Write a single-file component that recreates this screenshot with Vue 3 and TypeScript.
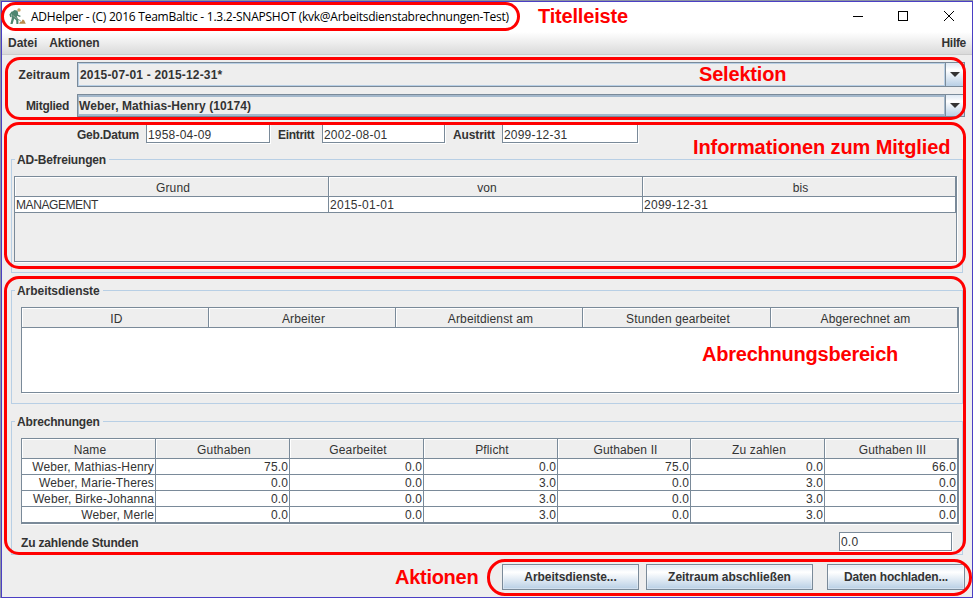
<script setup lang="ts">
interface TableData {
  kind: string
  columns: string[]
  rows: string[][]
}

const exemptions: TableData = {
  kind: 'exemptions',
  columns: ['Grund', 'von', 'bis'],
  rows: [['MANAGEMENT', '2015-01-01', '2099-12-31']],
}

const services: TableData = {
  kind: 'services',
  columns: ['ID', 'Arbeiter', 'Arbeitdienst am', 'Stunden gearbeitet', 'Abgerechnet am'],
  rows: [],
}

const billing: TableData = {
  kind: 'billing',
  columns: ['Name', 'Guthaben', 'Gearbeitet', 'Pflicht', 'Guthaben II', 'Zu zahlen', 'Guthaben III'],
  rows: [
    ['Weber, Mathias-Henry', '75.0', '0.0', '0.0', '75.0', '0.0', '66.0'],
    ['Weber, Marie-Theres', '0.0', '0.0', '3.0', '0.0', '3.0', '0.0'],
    ['Weber, Birke-Johanna', '0.0', '0.0', '3.0', '0.0', '3.0', '0.0'],
    ['Weber, Merle', '0.0', '0.0', '3.0', '0.0', '3.0', '0.0'],
  ],
}

const groups = [
  { title: 'AD-Befreiungen', table: exemptions, footer: false },
  { title: 'Arbeitsdienste', table: services, footer: false },
  { title: 'Abrechnungen', table: billing, footer: true },
]

const selectors = [
  { label: 'Zeitraum', value: '2015-07-01 - 2015-12-31*', kind: 'period' },
  { label: 'Mitglied', value: 'Weber, Mathias-Henry (10174)', kind: 'member' },
]

const dates = [
  { label: 'Geb.Datum', value: '1958-04-09', kind: 'born' },
  { label: 'Eintritt', value: '2002-08-01', kind: 'entry' },
  { label: 'Austritt', value: '2099-12-31', kind: 'exit' },
]

const notes = [
  { text: 'Titelleiste', kind: 'note-title' },
  { text: 'Selektion', kind: 'note-selection' },
  { text: 'Informationen zum Mitglied', kind: 'note-info' },
  { text: 'Abrechnungsbereich', kind: 'note-billing' },
  { text: 'Aktionen', kind: 'note-actions' },
]
const frames = ['frame-title', 'frame-selection', 'frame-info', 'frame-billing', 'frame-actions']
</script>

<template>
  <div class="desktop">
    <div class="window">
      <header class="titlebar">
        <svg class="app-icon" width="18" height="18" viewBox="0 0 18 18">
          <path d="M2.2 4.2 L5.6 2 L8.6 2.8 L9.2 6 L7.8 8.6 L9.4 11.6 L9.4 16 L7.4 16 L7.2 12.4 L5.2 10.6 L3.6 16 L1.4 16 L2.8 10 Z" fill="#4f8670" />
          <path d="M3.2 4 L1.2 6.6 L2 9" fill="none" stroke="#4f8670" stroke-width="1.5" />
          <path d="M7 3.8 L8.8 7.4 L11.4 8.4" fill="none" stroke="#4f8670" stroke-width="1.3" />
          <path d="M3.6 7.4 L12.2 13.4" stroke="#8aa596" stroke-width="1" />
          <circle cx="10" cy="2" r="1.7" fill="#c9a56a" />
          <path d="M10 15.8 L11 14 L12.4 13.8 L13.6 11.6 L15 12 L16.8 15.8 Z" fill="#b98a4b" />
        </svg>
        <span class="caption">ADHelper - (C) 2016 TeamBaltic - 1.3.2-SNAPSHOT (kvk@Arbeitsdienstabrechnungen-Test)</span>
        <svg class="controls" width="104" height="12" viewBox="0 0 104 12" fill="none" stroke="#000" shape-rendering="crispEdges">
          <path d="M0 6.5 H10" />
          <rect x="45.5" y="1.5" width="9" height="9" />
          <path d="M91 1 L101 11 M101 1 L91 11" shape-rendering="auto" />
        </svg>
      </header>

      <nav class="menubar">
        <span class="menu-file">Datei</span>
        <span>Aktionen</span>
        <span class="menu-help">Hilfe</span>
      </nav>

      <section class="selection">
        <div v-for="s in selectors" :key="s.label" class="select-row" :class="s.kind">
          <label>{{ s.label }}</label>
          <div class="combo">
            <span class="combo-value">{{ s.value }}</span>
            <span class="combo-arrow">
              <svg width="10" height="5" viewBox="0 0 10 5"><path d="M0 0 H10 L5 5 Z" fill="#333" /></svg>
            </span>
          </div>
        </div>
      </section>

      <section class="dates">
        <div v-for="d in dates" :key="d.label" class="date" :class="d.kind">
          <label>{{ d.label }}</label>
          <span class="field">{{ d.value }}</span>
        </div>
      </section>

      <fieldset v-for="g in groups" :key="g.title" class="group" :class="'group-' + g.table.kind">
        <legend>{{ g.title }}</legend>
        <div class="table" :class="g.table.kind">
          <div class="tr head">
            <span v-for="c in g.table.columns" :key="c" class="th">{{ c }}</span>
          </div>
          <div v-for="(r, i) in g.table.rows" :key="i" class="tr">
            <span v-for="(v, j) in r" :key="j" class="td" :class="{ caps: v === 'MANAGEMENT' }">{{ v }}</span>
          </div>
        </div>
        <div v-if="g.footer" class="total">
          <label>Zu zahlende Stunden</label>
          <span class="field">0.0</span>
        </div>
      </fieldset>

      <footer class="actions">
        <button type="button" class="btn-services">Arbeitsdienste...</button>
        <button type="button" class="btn-close">Zeitraum abschließen</button>
        <button type="button" class="btn-upload">Daten hochladen...</button>
      </footer>
    </div>

    <div v-for="f in frames" :key="f" class="frame" :class="f"></div>
    <div v-for="n in notes" :key="n.kind" class="note" :class="n.kind">{{ n.text }}</div>
  </div>
</template>

<style>
body {
  overflow: hidden;
}
</style>

<style scoped>
.desktop,
.desktop * {
  box-sizing: border-box;
}
.desktop {
  position: relative;
  width: 973px;
  height: 598px;
  padding: 1px 0 0 1px;
  background: #8b93a3;
  color: #333;
  font: 12px/14px 'Liberation Sans', Arial, sans-serif;
  letter-spacing: 0.13px;
  white-space: nowrap;
}
.window {
  height: 597px;
  border: 1px solid #4b3fc4;
  background: #eee;
}
.titlebar {
  display: flex;
  align-items: center;
  height: 30px;
  padding: 0 15px 0 7px;
  background: #fff;
  color: #000;
}
.app-icon {
  margin-right: 4px;
}
.caption {
  flex: 1;
  font-family: 'Open Sans', sans-serif;
  letter-spacing: -0.25px;
}
.controls {
  margin-top: -2px;
}
.menubar {
  display: flex;
  align-items: center;
  gap: 12px;
  height: 23px;
  padding: 0 6px 0 6px;
  border-bottom: 1px solid #ccc;
  background: linear-gradient(#fff, #dadada);
}
.menubar,
label,
legend,
.combo,
button {
  font-weight: bold;
  letter-spacing: -0.17px;
}
.menu-file {
  letter-spacing: 0;
}
.menu-help {
  margin-left: auto;
  letter-spacing: -0.3px;
}
.selection {
  display: flex;
  flex-direction: column;
  gap: 7px;
  padding: 7px 7px 0 6px;
}
.select-row {
  display: flex;
  align-items: center;
}
.select-row label {
  width: 62px;
  margin-right: 7px;
  text-align: right;
}
.period label {
  letter-spacing: 0.1px;
}
.member label {
  padding-right: 1px;
  letter-spacing: -0.28px;
}
.combo {
  display: flex;
  flex: 1;
  height: 25px;
  border: 1px solid #7a8a99;
}
.member .combo {
  height: 23px;
}
.combo-value {
  display: flex;
  flex: 1;
  align-items: center;
  padding-left: 1px;
  border: 1px solid #b8cfe5;
  letter-spacing: 0.18px;
}
.member .combo-value {
  padding-left: 0;
  border-width: 2px 1px 2px 1px;
  border-color: #a3b8cc;
  letter-spacing: 0.08px;
}
.combo-arrow {
  display: flex;
  align-items: center;
  justify-content: center;
  width: 19px;
  border-left: 1px solid #7a8a99;
  background: linear-gradient(#dde8f3, #fff 30%, #b8cfe5);
}
.dates {
  display: flex;
  height: 35px;
  padding: 6px 0 9px 75px;
}
.date {
  display: flex;
  align-items: center;
}
.date label {
  flex: none;
  padding-top: 3px;
}
.born label {
  width: 69px;
  letter-spacing: -0.23px;
}
.entry label {
  width: 52px;
  padding-left: 8px;
  letter-spacing: -0.3px;
}
.exit label {
  width: 57px;
  padding-left: 8px;
  letter-spacing: -0.1px;
}
.field {
  display: flex;
  align-items: center;
  height: 20px;
  padding: 3px 0 0 1px;
  border: 1px solid #7a8a99;
  background: #fff;
  box-shadow: 1px 1px #fff;
  letter-spacing: 0.2px;
}
.born .field {
  width: 124px;
}
.entry .field {
  width: 123px;
}
.exit .field {
  width: 136px;
}
.group {
  min-width: 0;
  height: 121px;
  margin: 0 9px 10px 9px;
  padding: 9px 3px 0 9px;
  border: 1px solid #b8cfe5;
}
.group-exemptions {
  padding: 9px 5px 0 2px;
}
.group-billing {
  height: 141px;
  margin-bottom: 9px;
}
legend {
  height: 15px;
  margin-left: -6px;
  padding: 0 3px 0 2px;
  line-height: 16px;
}
.group-exemptions legend {
  margin-left: 1px;
}
.group-services legend {
  letter-spacing: -0.05px;
}
.table {
  height: 86px;
  border: 1px solid #7a8a99;
  box-shadow: 1px 1px #fff;
}
.tr {
  display: grid;
  height: 16px;
}
.tr.head {
  height: 20px;
}
.exemptions .tr {
  grid-template-columns: 314px 314px 313px;
}
.services {
  background: #fff;
}
.services .tr {
  grid-template-columns: 187px 187px 187px 188px 187px;
}
.billing .tr {
  grid-template-columns: 134px 134px 134px 134px 133px 134px 133px;
}
.th,
.td {
  border: solid #7a8a99;
  border-width: 0 1px 1px 0;
  overflow: hidden;
}
.th {
  padding: 4px 0 0 3px;
  background: #eee;
  box-shadow: inset 1px 1px #fff;
  line-height: 14px;
  text-align: center;
}
.td {
  padding-left: 1px;
  background: #fff;
  line-height: 16px;
}
.exemptions .td {
  letter-spacing: 0.28px;
}
.exemptions .td.caps {
  letter-spacing: -0.42px;
}
.billing .td {
  padding: 0 1px 0 0;
  text-align: right;
}
.total {
  display: flex;
  align-items: center;
  justify-content: space-between;
  margin-top: 8px;
  padding-right: 7px;
}
.total label {
  padding-top: 2px;
}
.total .field {
  width: 113px;
  height: 19px;
  padding-top: 1px;
}
.actions {
  display: flex;
  justify-content: flex-end;
  padding-right: 7px;
}
.actions button {
  height: 26px;
  padding: 0;
  border: 1px solid #7a8a99;
  border-radius: 0;
  background: linear-gradient(#dde8f3, #fff 30%, #b8cfe5);
  box-shadow: inset 0 0 0 1px rgba(255, 255, 255, 0.35);
  color: #333;
  font-family: inherit;
  font-size: 12px;
}
.actions .btn-services {
  width: 137px;
  margin-right: 7px;
  letter-spacing: -0.06px;
}
.actions .btn-close {
  width: 167px;
  margin-right: 14px;
  letter-spacing: -0.03px;
}
.actions .btn-upload {
  width: 138px;
  letter-spacing: -0.14px;
}
.frame {
  position: absolute;
  border: 3px solid #f00;
  border-radius: 15px;
}
.frame-title {
  left: 1px;
  top: 2px;
  width: 519px;
  height: 29px;
}
.frame-selection {
  left: 5px;
  top: 57px;
  width: 961px;
  height: 63px;
}
.frame-info {
  left: 4px;
  top: 122px;
  width: 962px;
  height: 147px;
}
.frame-billing {
  left: 4px;
  top: 276px;
  width: 962px;
  height: 279px;
}
.frame-actions {
  left: 487px;
  top: 559px;
  width: 485px;
  height: 37px;
  border-radius: 18px;
}
.note {
  position: absolute;
  color: #f00;
  font-weight: bold;
  font-size: 20px;
  line-height: 24px;
  letter-spacing: -0.18px;
}
.note-title {
  left: 538px;
  top: 4px;
}
.note-selection {
  left: 699px;
  top: 62px;
}
.note-info {
  left: 693px;
  top: 135px;
  letter-spacing: -0.1px;
}
.note-billing {
  left: 702px;
  top: 342px;
  letter-spacing: -0.22px;
}
.note-actions {
  left: 395px;
  top: 565px;
  letter-spacing: -0.28px;
}
</style>
